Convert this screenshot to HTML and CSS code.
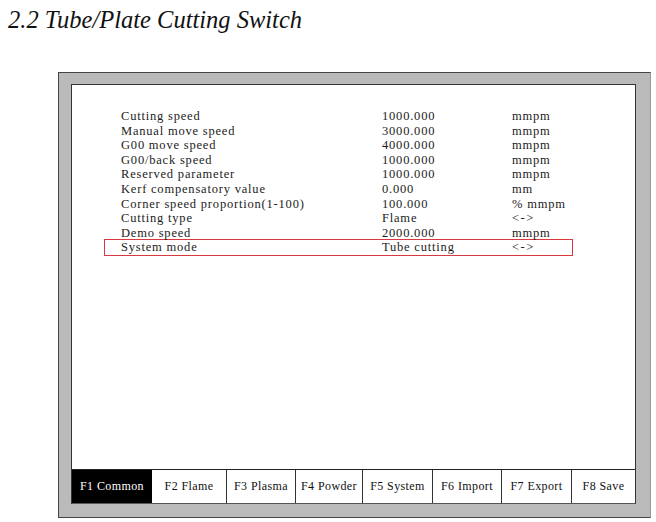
FILE: index.html
```html
<!DOCTYPE html>
<html>
<head>
<meta charset="utf-8">
<link rel="stylesheet" href="styles.css">
</head>
<body>
<h1 class="title">2.2 Tube/Plate Cutting Switch</h1>
<div class="frame">
  <div class="screen">
    <div class="params">
      <div class="row"><span>Cutting speed</span><span>1000.000</span><span>mmpm</span></div>
      <div class="row"><span>Manual move speed</span><span>3000.000</span><span>mmpm</span></div>
      <div class="row"><span>G00 move speed</span><span>4000.000</span><span>mmpm</span></div>
      <div class="row"><span>G00/back speed</span><span>1000.000</span><span>mmpm</span></div>
      <div class="row"><span>Reserved parameter</span><span>1000.000</span><span>mmpm</span></div>
      <div class="row"><span>Kerf compensatory value</span><span>0.000</span><span>mm</span></div>
      <div class="row"><span>Corner speed proportion(1-100)</span><span>100.000</span><span>% mmpm</span></div>
      <div class="row"><span>Cutting type</span><span>Flame</span><span class="arrow">&lt;-&gt;</span></div>
      <div class="row"><span>Demo speed</span><span>2000.000</span><span>mmpm</span></div>
      <div class="row selected"><span>System mode</span><span>Tube cutting</span><span class="arrow">&lt;-&gt;</span></div>
    </div>
    <div class="tabs">
      <div class="tab active t1">F1 Common</div>
      <div class="tab t2">F2 Flame</div>
      <div class="tab t3">F3 Plasma</div>
      <div class="tab t4">F4 Powder</div>
      <div class="tab t5">F5 System</div>
      <div class="tab t6">F6 Import</div>
      <div class="tab t7">F7 Export</div>
      <div class="tab t8">F8 Save</div>
    </div>
  </div>
</div>
</body>
</html>
```
FILE: styles.css
```css
html, body {
  margin: 0;
  padding: 0;
  background: #fff;
}
body {
  width: 656px;
  height: 522px;
  overflow: hidden;
}
.title {
  margin: 0;
  padding: 7px 0 0 8px;
  height: 26px;
  font-family: "Liberation Serif", serif;
  font-style: italic;
  font-weight: normal;
  font-size: 24.5px;
  line-height: 26px;
  color: #111;
}
.frame {
  margin: 39px 0 0 58px;
  width: 593px;
  height: 446px;
  box-sizing: border-box;
  border: 1px solid #444;
  border-right-color: #9a9a9a;
  background: #bababa;
  padding: 11px 14px 13px 12px;
}
.screen {
  height: 420px;
  box-sizing: border-box;
  border: 1px solid #333;
  border-bottom-color: #555;
  background: #fff;
  display: flex;
  flex-direction: column;
  font-family: "Liberation Serif", serif;
  font-size: 12.5px;
  letter-spacing: 0.8px;
  color: #1c1c1c;
}
.params {
  flex: 1;
  padding: 24px 0 0 49px;
}
.row {
  display: grid;
  grid-template-columns: 261px 130px 1fr;
  height: 14.6px;
  line-height: 14.6px;
  white-space: nowrap;
}
.arrow {
  letter-spacing: 1.5px;
}
.row.selected {
  margin: -1.2px 0 0 -17px;
  padding-left: 16px;
  width: 469px;
  height: 17px;
  line-height: 15px;
  box-sizing: border-box;
  border: 1px solid #d8383e;
}
.tabs {
  height: 34px;
  box-sizing: border-box;
  border-top: 1px solid #222;
  display: flex;
  font-size: 12px;
  letter-spacing: 0.4px;
}
.tab {
  box-sizing: border-box;
  border-right: 1px solid #333;
  text-align: center;
  line-height: 33px;
  white-space: nowrap;
  color: #111;
}
.tab.active {
  background: #000;
  color: #fff;
  border-right: none;
}
.t1 { width: 80px; }
.t2 { width: 75px; }
.t3 { width: 69px; }
.t4 { width: 67px; }
.t5 { width: 70px; }
.t6 { width: 69px; }
.t7 { width: 70px; }
.t8 { flex: 1; border-right: none; }
```
